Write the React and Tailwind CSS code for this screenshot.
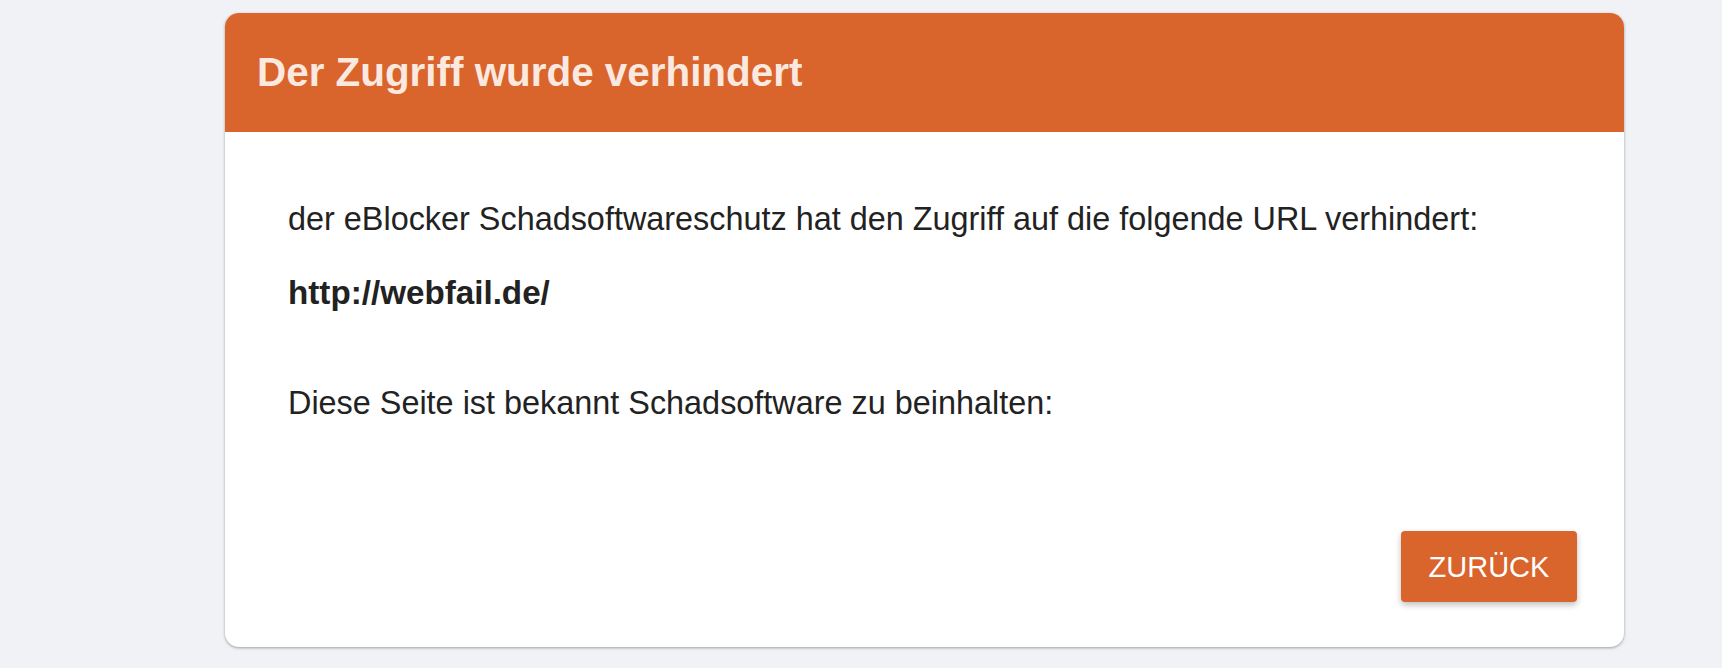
export default function App() {
  return (
    <div className="min-h-[668px] w-full bg-[#f1f2f6] pt-[13px] pl-[225px] font-['Liberation_Sans',Arial,sans-serif]">
      <div className="w-[1399px] h-[634px] bg-white rounded-[14px] overflow-hidden shadow-[0_1px_3px_rgba(0,0,0,0.35)] flex flex-col">
        {/* Header */}
        <div className="h-[119px] flex-shrink-0 bg-[#d9642c] flex items-center pl-[32px]">
          <h1 className="text-[40.4px] font-bold text-[#fbe9e0] leading-none">Der Zugriff wurde verhindert</h1>
        </div>
        {/* Body */}
        <div className="flex-1 flex flex-col pl-[63px] pr-[47px] pt-[66px] text-[32.4px] leading-[42px] text-[#222222]">
          <p>der eBlocker Schadsoftwareschutz hat den Zugriff auf die folgende URL verhindert:</p>
          <p className="mt-[32px] font-bold text-[33.2px]">http://webfail.de/</p>
          <p className="mt-[68px]">Diese Seite ist bekannt Schadsoftware zu beinhalten:</p>
          <div className="flex justify-end mt-[107px]">
            <button className="w-[176px] h-[71px] bg-[#d9642c] text-white text-[29px] rounded-[4px] shadow-[0_3px_6px_rgba(0,0,0,0.25)] flex items-center justify-center">
              ZURÜCK
            </button>
          </div>
        </div>
      </div>
    </div>
  )
}
